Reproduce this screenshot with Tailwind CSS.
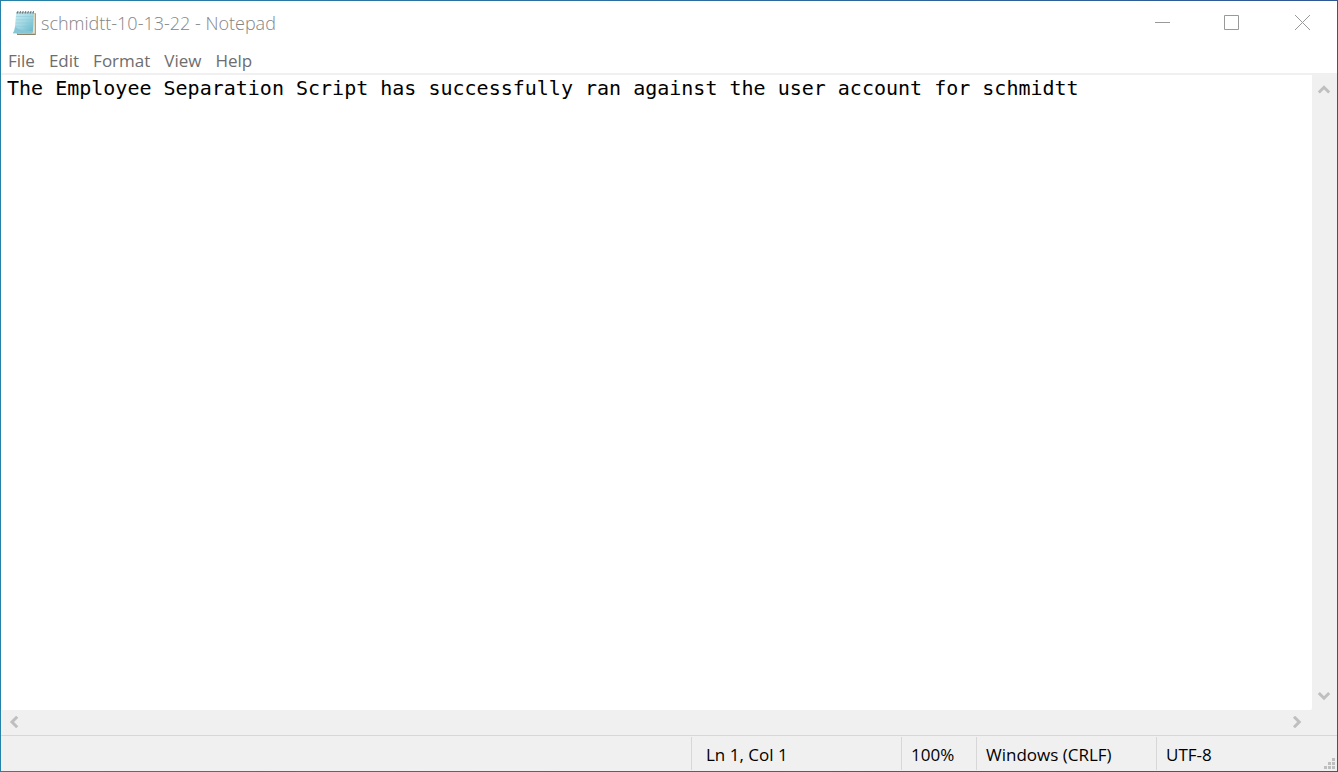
<!DOCTYPE html>
<html lang="en">
<head>
<meta charset="utf-8">
<meta name="viewport" content="width=device-width, initial-scale=1">
<title>schmidtt-10-13-22 - Notepad</title>
<script src="https://cdn.jsdelivr.net/npm/@tailwindcss/browser@4"></script>
</head>
<body class="flex h-screen bg-linear-to-r from-[#2681a8] to-[#2f5794] p-px font-['Open_Sans','Noto_Sans',sans-serif] text-[17px]">
<div class="flex min-w-0 flex-1 flex-col bg-white">
  <header class="flex h-11 items-center pl-[11px]">
    <svg class="mr-1 h-[26px] w-[25px] shrink-0" viewBox="0 0 24 24" preserveAspectRatio="none" aria-hidden="true">
      <defs>
        <linearGradient id="page" x1="0" y1="0" x2="1" y2="1">
          <stop offset="0" stop-color="#d3eff5"/>
          <stop offset=".5" stop-color="#a0d8e4"/>
          <stop offset="1" stop-color="#5fb3c8"/>
        </linearGradient>
      </defs>
      <path d="M20 2.500 22.800 3v20H5L4.500 21.500z" fill="#8d8166"/>
      <path d="M20 3h2v19H5z" fill="#e6dcc0"/>
      <path d="M4 2h17l-1 18q-.3 1.500-2 1.500H.8q2-3 2.400-10z" fill="url(#page)"/>
      <path d="M.8 21.500q2-2 2.400-6Q8 19.500 20 19.500q-.3 2-2 2z" fill="#87c6d6"/>
      <path d="M4 6h16.500M3.800 9h16.500M3.500 12h16.500M3.200 15h16.500" stroke="#82c3d1" stroke-width=".6" opacity=".6"/>
      <path d="M4 2.500h17" stroke="#b4c4c8" stroke-width="1.500"/>
      <path d="M5 3.200l.8-2.200M7.500 3.200l.8-2.200M10 3.200l.8-2.200M12.500 3.200l.8-2.200M15 3.200l.8-2.200M17.500 3.200l.8-2.200M20 3.200l.8-2.200" stroke="#66757b" stroke-width="1"/>
    </svg>
    <h1 class="flex-1 truncate text-[18px] font-light text-[#858585]">schmidtt-10-13-22 - Notepad</h1>
    <div class="flex h-full text-[#999999]">
      <button type="button" aria-label="Minimize" class="flex w-[70px] items-center justify-center">
        <svg class="size-4" viewBox="0 0 16 16"><path d="M1 7.500h15" stroke="currentColor"/></svg>
      </button>
      <button type="button" aria-label="Maximize" class="flex w-[70px] items-center justify-center">
        <svg class="size-4" viewBox="0 0 16 16"><path d="M.5 .5h14v14H.5z" fill="none" stroke="currentColor"/></svg>
      </button>
      <button type="button" aria-label="Close" class="flex w-[70px] items-center justify-center">
        <svg class="size-4" viewBox="0 0 16 16"><path d="M1 0l15 15M16 0 1 15" stroke="currentColor"/></svg>
      </button>
    </div>
  </header>
  <nav aria-label="Menu bar" class="flex h-[30px] items-center gap-3.5 border-b-2 border-[#f0f0f0] pt-1 pl-[7px] text-[#6d6d6d]">
    <button type="button">File</button>
    <button type="button">Edit</button>
    <button type="button">Format</button>
    <button type="button">View</button>
    <button type="button">Help</button>
  </nav>
  <main class="flex min-h-0 flex-1 bg-[#f0f0f0]">
    <textarea aria-label="Document text" wrap="off" spellcheck="false" class="min-w-0 flex-1 resize-none overflow-hidden rounded-br-xs bg-white px-1.5 py-px font-['DejaVu_Sans_Mono',monospace] text-[20px] leading-6 text-black outline-none">The Employee Separation Script has successfully ran against the user account for schmidtt</textarea>
    <div class="flex w-[25px] flex-col justify-between text-[#bfbfbf]">
      <button type="button" aria-label="Scroll up" class="flex h-7 w-6 items-center justify-center">
        <svg class="h-3 w-3" viewBox="0 0 12 12"><path d="M.8 9.500 6 4.300l5.200 5.200" fill="none" stroke="currentColor" stroke-width="3"/></svg>
      </button>
      <button type="button" aria-label="Scroll down" class="flex h-7 w-6 items-center justify-center">
        <svg class="h-3 w-3" viewBox="0 0 12 12"><path d="M.8 3 6 8.200 11.200 3" fill="none" stroke="currentColor" stroke-width="3"/></svg>
      </button>
    </div>
  </main>
  <div class="flex h-[25px] justify-between bg-[#f0f0f0] pr-7 text-[#bfbfbf]">
    <button type="button" aria-label="Scroll left" class="flex h-6 w-[25px] items-center justify-center">
      <svg class="h-3 w-3" viewBox="0 0 12 12"><path d="M9.200 .8 4 6l5.200 5.200" fill="none" stroke="currentColor" stroke-width="3"/></svg>
    </button>
    <button type="button" aria-label="Scroll right" class="flex h-6 w-[25px] items-center justify-center">
      <svg class="h-3 w-3" viewBox="0 0 12 12"><path d="M3 .8 8.200 6 3 11.200" fill="none" stroke="currentColor" stroke-width="3"/></svg>
    </button>
  </div>
  <footer class="relative flex h-9 justify-end border-t border-[#d7d7d7] bg-[#f0f0f0] pt-px pb-px leading-[35px] text-black">
    <p class="w-[210px] border-l border-[#d7d7d7] pl-3.5">Ln 1, Col 1</p>
    <p class="w-[75px] border-l border-[#d7d7d7] pl-[9px]">100%</p>
    <p class="w-[180px] border-l border-[#d7d7d7] pl-[9px]">Windows (CRLF)</p>
    <p class="w-[181px] border-l border-[#d7d7d7] pl-[9px]">UTF-8</p>
    <svg class="absolute right-0.5 bottom-0.5 size-[11px]" viewBox="0 0 11 11" fill="#bfbfbf" aria-hidden="true">
      <path d="M8 0h3v3H8zM4 4h3v3H4zM8 4h3v3H8zM0 8h3v3H0zM4 8h3v3H4zM8 8h3v3H8z"/>
    </svg>
  </footer>
</div>
</body>
</html>
